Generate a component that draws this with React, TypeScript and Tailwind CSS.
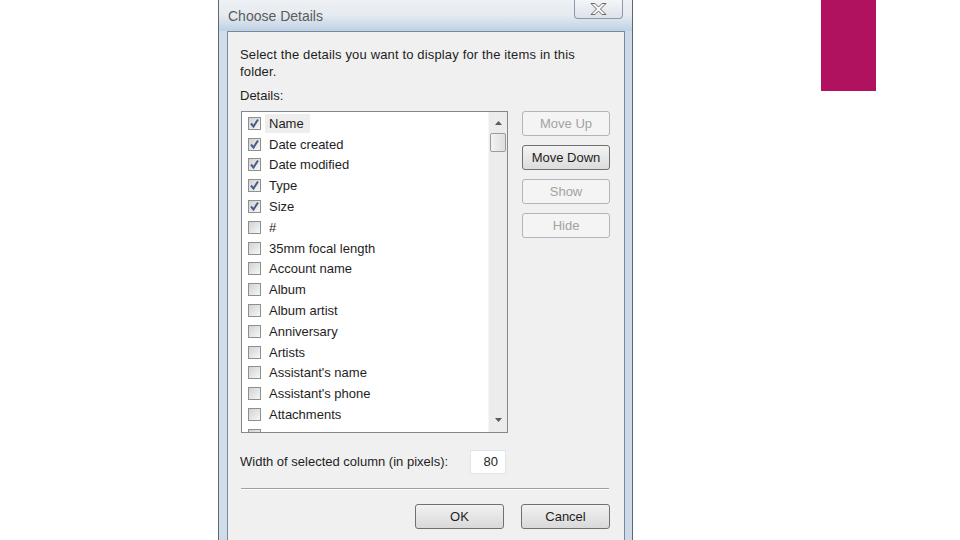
import React from 'react'

const items = [
    { label: 'Name', checked: true, focus: true },
    { label: 'Date created', checked: true },
    { label: 'Date modified', checked: true },
    { label: 'Type', checked: true },
    { label: 'Size', checked: true },
    { label: '#', checked: false },
    { label: '35mm focal length', checked: false },
    { label: 'Account name', checked: false },
    { label: 'Album', checked: false },
    { label: 'Album artist', checked: false },
    { label: 'Anniversary', checked: false },
    { label: 'Artists', checked: false },
    { label: "Assistant's name", checked: false },
    { label: "Assistant's phone", checked: false },
    { label: 'Attachments', checked: false },
]

function CheckBox({ checked }: { checked: boolean }) {
    return (
        <div className="w-[13px] h-[13px] shrink-0 border border-[#8e8f8f] bg-gradient-to-br from-[#d2d2d2] to-[#f7f7f7] flex items-center justify-center">
            {checked && (
                <svg width="11" height="11" viewBox="0 0 11 11">
                    <path d="M2 5.5 L4.5 8.5 L9 1.5" fill="none" stroke="#4a5d86" strokeWidth="2" />
                </svg>
            )}
        </div>
    )
}

function SideButton({ label, enabled }: { label: string, enabled?: boolean }) {
    return enabled ? (
        <div className="h-[25px] w-[88px] flex items-center justify-center rounded-[3px] border border-[#707070] bg-gradient-to-b from-[#f3f3f3] to-[#dcdcdc] text-[#1e1e1e]">
            {label}
        </div>
    ) : (
        <div className="h-[25px] w-[88px] flex items-center justify-center rounded-[3px] border border-[#b1b5b8] bg-[#f4f4f4] text-[#a2a2a2]">
            {label}
        </div>
    )
}

function ScrollArrow({ up }: { up?: boolean }) {
    return (
        <svg width="7" height="4" viewBox="0 0 7 4">
            <path d={up ? 'M0 4 L3.5 0 L7 4 Z' : 'M0 0 L3.5 4 L7 0 Z'} fill="#5a5a5a" />
        </svg>
    )
}

export default function App() {
    return (
        <div className="w-[960px] h-[540px] overflow-hidden bg-white flex font-['Liberation_Sans',Arial,sans-serif] text-[13px] text-[#1e1e1e]">
            <div className="ml-[218px] w-[415px] h-[600px] shrink-0 flex flex-col border-x border-[#5f6670] bg-gradient-to-r from-[#cfdcea] via-[#dfe8f1] to-[#cbd9e8]">
                <div className="h-[31px] flex justify-between bg-gradient-to-b from-[#eef1f4] via-[#e4eaf0] to-[#bdd1e5]">
                    <span className="ml-[9px] mt-[6px] text-[14px] text-[#5c5c5c]">Choose Details</span>
                    <div className="mr-[9px] w-[49px] h-[19px] flex items-center justify-center rounded-b-[4px] border border-t-0 border-[#8c99a8] bg-gradient-to-b from-[#f4f6f8] to-[#dde3ea]">
                        <svg width="17" height="12" viewBox="0 0 17 12">
                            <path d="M1 0.5 H5 L8.5 4 L12 0.5 H16 L10.5 6 L16 11.5 H12 L8.5 8 L5 11.5 H1 L6.5 6 Z" fill="#f7f7f7" stroke="#6a6a6a" strokeWidth="1" />
                        </svg>
                    </div>
                </div>
                <div className="mx-[8px] mr-[7px] flex-1 flex flex-col border border-[#7b8896] bg-[#f0f0f0] px-[12px]">
                    <p className="mt-[14px] max-w-[350px] leading-[17px] tracking-[0.15px]">Select the details you want to display for the items in this folder.</p>
                    <p className="mt-[7px] leading-[17px]">Details:</p>
                    <div className="mt-[7px] flex gap-[14px]">
                        <div className="ml-[1px] w-[267px] h-[322px] border border-[#828790] bg-white flex overflow-hidden">
                            <div className="flex-1 pt-[1px] pl-[6px] flex flex-col">
                                {items.map((item) => (
                                    <div key={item.label} className="h-[20.8px] shrink-0 flex items-center">
                                        <CheckBox checked={item.checked} />
                                        <span className={`ml-[4px] px-[4px] leading-[19px] ${item.focus ? 'bg-[#eeeeee] pr-[6px]' : ''}`}>{item.label}</span>
                                    </div>
                                ))}
                                <div className="h-[20.8px] shrink-0 flex items-center">
                                    <CheckBox checked={false} />
                                </div>
                            </div>
                            <div className="w-[19px] h-full bg-[#ececec] border-l border-[#f6f6f6] flex flex-col items-center">
                                <div className="h-[21px] w-full flex items-center justify-center">
                                    <ScrollArrow up />
                                </div>
                                <div className="w-[16px] h-[19px] rounded-[2px] border border-[#9b9b9b] bg-gradient-to-r from-[#f3f3f3] to-[#dedede]"></div>
                                <div className="flex-1"></div>
                                <div className="h-[24px] w-full flex items-center justify-center">
                                    <ScrollArrow />
                                </div>
                            </div>
                        </div>
                        <div className="flex flex-col gap-[9px]">
                            <SideButton label="Move Up" />
                            <SideButton label="Move Down" enabled />
                            <SideButton label="Show" />
                            <SideButton label="Hide" />
                        </div>
                    </div>
                    <div className="mt-[17px] flex items-center">
                        <span>Width of selected column (in pixels):</span>
                        <div className="ml-auto mr-[106px] w-[36px] h-[24px] bg-white border border-[#e2e3ea] flex items-center justify-end pr-[7px]">80</div>
                    </div>
                    <div className="mt-[14px] mr-[3px] ml-[1px] h-[2px] border-t border-[#a0a0a0] border-b border-b-white"></div>
                    <div className="mt-[14px] mr-[2px] flex justify-end gap-[17px]">
                        <div className="h-[25px] w-[89px] flex items-center justify-center rounded-[3px] border border-[#707070] bg-gradient-to-b from-[#f2f2f2] to-[#d9d9d9]">OK</div>
                        <div className="h-[25px] w-[89px] flex items-center justify-center rounded-[3px] border border-[#707070] bg-gradient-to-b from-[#f2f2f2] to-[#d9d9d9]">Cancel</div>
                    </div>
                </div>
            </div>
            <div className="ml-[188px] w-[55px] h-[91px] bg-[#b0125f]"></div>
        </div>
    )
}
